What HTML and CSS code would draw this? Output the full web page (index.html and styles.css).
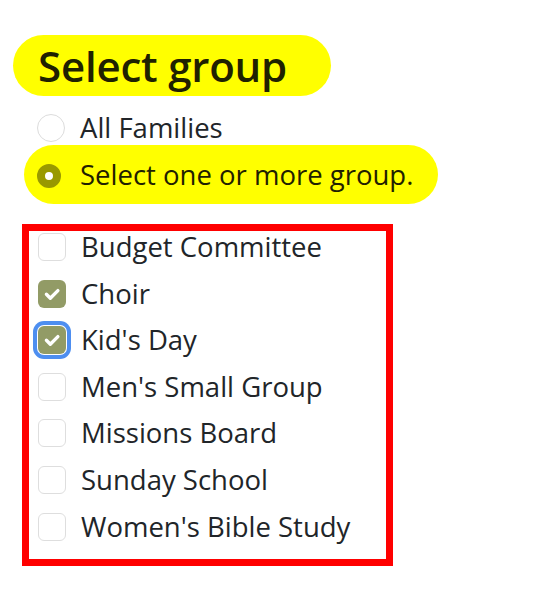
FILE: index.html
```html
<!DOCTYPE html>
<html lang="en">
<head>
<meta charset="utf-8">
<title>Select group</title>
<link rel="stylesheet" href="styles.css">
</head>
<body>
<main class="page">
  <h1 class="title">Select group</h1>
  <div class="options">
    <label class="option">
      <span class="radio"></span>
      <span class="option-text">All Families</span>
    </label>
    <label class="option option-active">
      <span class="radio radio-checked"></span>
      <span class="option-text">Select one or more group.</span>
    </label>
  </div>
  <div class="groups">
    <label class="group"><span class="box"></span><span class="group-text">Budget Committee</span></label>
    <label class="group"><span class="box box-checked"><svg viewBox="0 0 20 20"><path d="M6 10.2l2.8 2.8l5.4-5.4"/></svg></span><span class="group-text">Choir</span></label>
    <label class="group"><span class="box box-checked box-focus"><svg viewBox="0 0 20 20"><path d="M6 10.2l2.8 2.8l5.4-5.4"/></svg></span><span class="group-text">Kid's Day</span></label>
    <label class="group"><span class="box"></span><span class="group-text">Men's Small Group</span></label>
    <label class="group"><span class="box"></span><span class="group-text">Missions Board</span></label>
    <label class="group"><span class="box"></span><span class="group-text">Sunday School</span></label>
    <label class="group"><span class="box"></span><span class="group-text">Women's Bible Study</span></label>
  </div>
</main>
</body>
</html>
```

FILE: styles.css
```css
* { box-sizing: border-box; }

html, body {
  margin: 0;
  padding: 0;
  background: #ffffff;
}

body {
  font-family: "Open Sans", "Noto Sans", sans-serif;
  color: #212529;
}

.page {
  padding: 35px 0 0 13px;
  display: flex;
  flex-direction: column;
  align-items: flex-start;
}

.title {
  margin: 0;
  height: 61px;
  padding: 0 44px 0 25px;
  border-radius: 31px;
  background: #ffff00;
  font-size: 42px;
  font-weight: 600;
  line-height: 61px;
  color: #1f2100;
  letter-spacing: -0.2px;
}

.options {
  margin: 14px 0 0 11px;
  display: flex;
  flex-direction: column;
  align-items: flex-start;
}

.option {
  display: flex;
  align-items: center;
  gap: 15px;
  padding: 0 25px 0 13px;
  height: 35px;
}

.option-active {
  height: 59px;
  background: #ffff00;
  border-radius: 30px;
}

.option-active .option-text {
  color: #1f2100;
}

.option-text {
  font-size: 27.5px;
  line-height: 38px;
}

.radio {
  width: 28px;
  height: 28px;
  flex: none;
  border-radius: 50%;
  border: 1px solid #dcdcdc;
  background: #ffffff;
}

.radio-checked {
  width: 24px;
  height: 24px;
  margin: 2px 4px 0 0;
  border: 8px solid #999900;
  background: #ffffff;
}

.groups {
  margin: 20px 0 0 9px;
  width: 371px;
  border: 7px solid #ff0000;
  padding: 2px 0 18px 9px;
  display: flex;
  flex-direction: column;
  gap: 18.6px;
}

.group {
  display: flex;
  align-items: center;
  gap: 15px;
  height: 28px;
}

.group-text {
  font-size: 27.5px;
  line-height: 38px;
  white-space: nowrap;
}

.box {
  width: 28px;
  height: 28px;
  flex: none;
  border-radius: 6px;
  border: 1px solid #dedede;
  background: #ffffff;
  display: flex;
  align-items: center;
  justify-content: center;
}

.box svg {
  width: 28px;
  height: 28px;
  fill: none;
  stroke: #ffffff;
  stroke-width: 2.4;
  stroke-linecap: round;
  stroke-linejoin: round;
}

.box-checked {
  border: none;
  background: #929b66;
}

.box-focus {
  box-shadow: 0 0 0 1px #ffffff, 0 0 0 5px #4d8ef0;
}
```
